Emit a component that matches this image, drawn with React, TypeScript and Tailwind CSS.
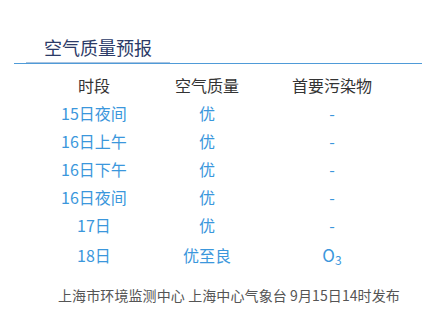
const rows = [
  { period: '15日夜间', quality: '优', pollutant: '-' },
  { period: '16日上午', quality: '优', pollutant: '-' },
  { period: '16日下午', quality: '优', pollutant: '-' },
  { period: '16日夜间', quality: '优', pollutant: '-' },
  { period: '17日', quality: '优', pollutant: '-' },
];

export default function App() {
  return (
    <div
      className="w-[436px] h-[327px] bg-white overflow-hidden"
      style={{ fontFamily: '"Noto Sans CJK SC", "Open Sans", sans-serif' }}
    >
      <div className="mx-[14px] pt-[33px] border-b border-[#4f9bd8] flex">
        <div className="ml-[12px] px-[18px] border-b border-[#a9c3df] text-[18px] leading-[29px] text-[#2b3a67]">
          空气质量预报
        </div>
      </div>

      <div className="mx-[14px] mt-[6px]">
        <div className="grid grid-cols-[160px_66px_184px] h-[29px] items-center text-center text-[16px] text-[#333]">
          <span>时段</span>
          <span>空气质量</span>
          <span>首要污染物</span>
        </div>
        {rows.map(r => (
          <div
            key={r.period}
            className="grid grid-cols-[160px_66px_184px] h-[28px] items-center text-center text-[16px] text-[#3b97dc]"
          >
            <span>{r.period}</span>
            <span>{r.quality}</span>
            <span>{r.pollutant}</span>
          </div>
        ))}
        <div className="grid grid-cols-[160px_66px_184px] h-[32px] items-center text-center text-[16px] text-[#3b97dc]">
          <span>18日</span>
          <span>优至良</span>
          <span className="text-[17px]">
            O<sub className="text-[12px]">3</sub>
          </span>
        </div>
      </div>

      <div className="mt-[14px] pl-[58px] text-[14px] leading-[20px] text-[#555] whitespace-nowrap tracking-[0.1px]">
        上海市环境监测中心 上海中心气象台 9月15日14时发布
      </div>
    </div>
  );
}
